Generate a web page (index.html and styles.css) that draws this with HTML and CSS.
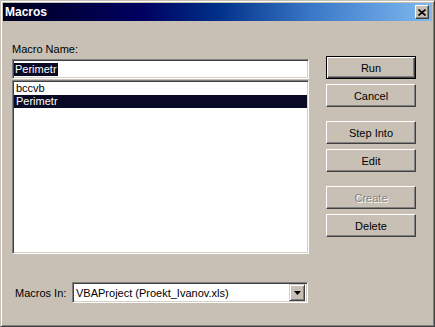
FILE: index.html
```html
<!DOCTYPE html>
<html lang="en">
<head>
    <meta charset="UTF-8">
    <title>Macros</title>
    <link rel="stylesheet" href="styles.css">
</head>
<body>
    <div class="window">
        <div class="titlebar">
            <span class="title">Macros</span>
            <button class="close" type="button">
                <svg width="8" height="7" viewBox="0 0 8 7"><path d="M0.5 0.5 L7.5 6.5 M7.5 0.5 L0.5 6.5" stroke="#000" stroke-width="1.6" fill="none"/></svg>
            </button>
        </div>
        <div class="content">
            <div class="main">
                <div class="left">
                    <div class="label">Macro Name:</div>
                    <div class="textbox"><span class="sel">Perimetr</span></div>
                    <ul class="listbox">
                        <li>bccvb</li>
                        <li class="selected">Perimetr</li>
                    </ul>
                </div>
                <div class="buttons">
                    <button class="btn default" type="button">Run</button>
                    <button class="btn" type="button">Cancel</button>
                    <button class="btn group" type="button">Step Into</button>
                    <button class="btn" type="button">Edit</button>
                    <button class="btn group disabled" type="button">Create</button>
                    <button class="btn" type="button">Delete</button>
                </div>
            </div>
            <div class="macros-in">
                <span class="in-label">Macros In:</span>
                <div class="combo">
                    <span class="combo-text">VBAProject (Proekt_Ivanov.xls)</span>
                    <span class="drop">
                        <svg width="7" height="4" viewBox="0 0 7 4"><path d="M0 0 H7 L3.5 4 Z" fill="#000"/></svg>
                    </span>
                </div>
            </div>
        </div>
    </div>
</body>
</html>
```

FILE: styles.css
```css
body {
    margin: 0;
    font-family: "Liberation Sans", Arial, sans-serif;
    font-size: 11px;
    color: #000;
}

.window {
    box-sizing: border-box;
    width: 435px;
    height: 327px;
    background: #c8c0b4;
    border: 1px solid;
    border-color: #c8c0b4 #404040 #404040 #c8c0b4;
    box-shadow: inset 1px 1px #fff, inset -1px -1px #808080;
    padding: 2px;
}

.titlebar {
    height: 18px;
    display: flex;
    align-items: center;
    justify-content: space-between;
    padding: 0 3px 0 2px;
    background: linear-gradient(to right, #000020 0%, #000060 32%, #003088 50%, #3a78c8 72%, #80baf0 100%);
}

.title {
    color: #fff;
    font-weight: bold;
    font-size: 12px;
}

.close {
    box-sizing: border-box;
    width: 14px;
    height: 14px;
    padding: 0;
    display: flex;
    align-items: center;
    justify-content: center;
    background: #c8c0b4;
    border: 1px solid;
    border-color: #fff #404040 #404040 #fff;
    box-shadow: inset -1px -1px #808080;
}

.content {
    padding: 22px 0 0 9px;
}

.main {
    display: flex;
}

.left {
    width: 297px;
}

.label {
    line-height: 13px;
    height: 13px;
    margin-bottom: 3px;
}

.textbox,
.listbox,
.combo {
    box-sizing: border-box;
    background: #fff;
    border: 1px solid;
    border-color: #808080 #fff #fff #808080;
    box-shadow: inset 1px 1px #404040, inset -1px -1px #d4d0c8;
}

.textbox {
    height: 20px;
    padding: 3px 1px 0;
}

.sel {
    display: inline-block;
    background: #0a0a24;
    color: #fff;
    line-height: 13px;
    padding: 0 1px;
}

.listbox {
    height: 174px;
    margin: 1px 0 0;
    padding: 1px;
    list-style: none;
}

.listbox li {
    height: 13px;
    line-height: 13px;
    padding-left: 2px;
}

.listbox li.selected {
    background: #0a0a24;
    color: #fff;
}

.buttons {
    margin: 13px 0 0 17px;
    width: 90px;
    display: flex;
    flex-direction: column;
}

.btn {
    box-sizing: border-box;
    height: 23px;
    margin-top: 5px;
    padding: 0;
    font: inherit;
    color: #000;
    background: #c8c0b4;
    border: 1px solid;
    border-color: #fff #404040 #404040 #fff;
    box-shadow: inset -1px -1px #808080;
}

.btn:first-child {
    margin-top: 0;
}

.btn.group {
    margin-top: 14px;
}

.btn.default {
    border-color: #000;
    box-shadow: inset 1px 1px #fff, inset -1px -1px #404040, inset -2px -2px #808080;
}

.btn.disabled {
    color: #808080;
    text-shadow: 1px 1px 0 #fff;
}

.macros-in {
    display: flex;
    align-items: center;
    margin-top: 28px;
    padding-left: 3px;
}

.in-label {
    width: 57px;
}

.combo {
    width: 236px;
    height: 21px;
    display: flex;
    align-items: center;
    justify-content: space-between;
    padding: 2px;
}

.combo-text {
    padding-left: 1px;
}

.drop {
    box-sizing: border-box;
    width: 16px;
    height: 17px;
    display: flex;
    align-items: center;
    justify-content: center;
    background: #c8c0b4;
    border: 1px solid;
    border-color: #d4d0c8 #404040 #404040 #d4d0c8;
    box-shadow: inset 1px 1px #fff, inset -1px -1px #808080;
}
```
